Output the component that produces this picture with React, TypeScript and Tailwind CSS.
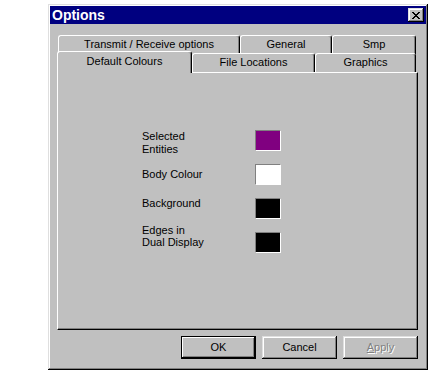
import React from 'react'

const win95Raised =
  'shadow-[inset_-1px_-1px_0_#000,inset_1px_1px_0_#dfdfdf,inset_-2px_-2px_0_#808080,inset_2px_2px_0_#fff]'

interface ColourRow {
  label: string[]
  colour: string
  offset: string
}

// labels don't sit centred on their swatches in the original, so each gets its own offset
const rows: ColourRow[] = [
  { label: ['Selected', 'Entities'], colour: 'bg-[#800080]', offset: 'mt-0 leading-[13px]' },
  { label: ['Body Colour'], colour: 'bg-white', offset: 'mt-[4px] leading-[13px]' },
  { label: ['Background'], colour: 'bg-black', offset: 'mt-[-1px] leading-[13px]' },
  { label: ['Edges in', 'Dual Display'], colour: 'bg-black', offset: 'mt-[-8px] leading-[12px]' },
]

function BackTab({ label, width }: { label: string; width: string }) {
  return (
    <div
      className={`${width} h-[19px] flex items-center justify-center border-l border-t border-white border-r border-r-black rounded-t-[3px] shadow-[inset_-1px_0_0_#808080] pb-[1px]`}
    >
      {label}
    </div>
  )
}

function Button({ label, isDefault, disabled }: { label: React.ReactNode; isDefault?: boolean; disabled?: boolean }) {
  return (
    <div
      className={`w-[75px] h-[23px] flex items-center justify-center bg-[#c0c0c0] ${
        isDefault
          ? 'border border-black shadow-[inset_-1px_-1px_0_#000,inset_1px_1px_0_#fff,inset_-2px_-2px_0_#808080]'
          : win95Raised
      } ${disabled ? 'text-[#808080] [text-shadow:1px_1px_0_#fff]' : 'text-black'}`}
    >
      {label}
    </div>
  )
}

export default function App() {
  return (
    <div className="w-[432px] h-[376px] bg-white pl-[48px] pt-[4px] font-['Liberation_Sans',Arial,sans-serif] text-[11px] text-black">
      <div className={`w-[380px] h-[366px] bg-[#c0c0c0] p-[2px] flex flex-col ${win95Raised}`}>
        {/* Title bar */}
        <div className="h-[18px] bg-[#000080] flex items-center justify-between pl-[2px] pr-[2px]">
          <span className="text-white font-bold text-[14px] leading-none">Options</span>
          <div className={`w-[16px] h-[14px] bg-[#c0c0c0] flex items-center justify-center ${win95Raised}`}>
            <svg width="8" height="7" viewBox="0 0 8 7" shapeRendering="crispEdges">
              <path
                d="M0 0h2v1h-2zM6 0h2v1h-2zM1 1h2v1h-2zM5 1h2v1h-2zM2 2h4v1h-4zM3 3h2v1h-2zM2 4h4v1h-4zM1 5h2v1h-2zM5 5h2v1h-2zM0 6h2v1h-2zM6 6h2v1h-2z"
                fill="#000"
              />
            </svg>
          </div>
        </div>

        {/* Tabs */}
        <div className="mt-[11px] ml-[7px] w-[361px] flex flex-col">
          <div className="flex h-[18px] pl-[1px] items-start">
            <BackTab label="Transmit / Receive options" width="w-[182px]" />
            <BackTab label="General" width="w-[92px]" />
            <BackTab label="Smp" width="w-[84px]" />
          </div>
          <div className="flex h-[19px] items-start">
            <div className="relative z-10 w-[135px] h-[22px] mt-[-2px] bg-[#c0c0c0] flex items-center justify-center pb-[3px] border-l border-t border-white border-r border-r-black rounded-t-[3px] shadow-[inset_-1px_0_0_#808080]">
              Default Colours
            </div>
            <BackTab label="File Locations" width="w-[123px]" />
            <BackTab label="Graphics" width="w-[101px]" />
          </div>

          {/* Panel */}
          <div className="h-[258px] border-l border-t border-white border-r border-b border-r-black border-b-black shadow-[inset_-1px_-1px_0_#808080] pt-[57px] pl-[84px]">
            <div className="flex flex-col gap-[13px]">
              {rows.map((row) => (
                <div key={row.label.join(' ')} className="flex items-start h-[21px]">
                  <div className={`w-[113px] ${row.offset}`}>
                    {row.label.map((line) => (
                      <div key={line}>{line}</div>
                    ))}
                  </div>
                  <div
                    className={`w-[26px] h-[21px] ${row.colour} border-l border-t border-[#808080] border-r border-b border-r-white border-b-white`}
                  />
                </div>
              ))}
            </div>
          </div>
        </div>

        {/* Buttons */}
        <div className="mt-[6px] ml-[7px] w-[361px] flex justify-end gap-[6px]">
          <Button label="OK" isDefault />
          <Button label="Cancel" />
          <Button
            label={
              <span>
                <span className="underline">A</span>pply
              </span>
            }
            disabled
          />
        </div>
      </div>
    </div>
  )
}
